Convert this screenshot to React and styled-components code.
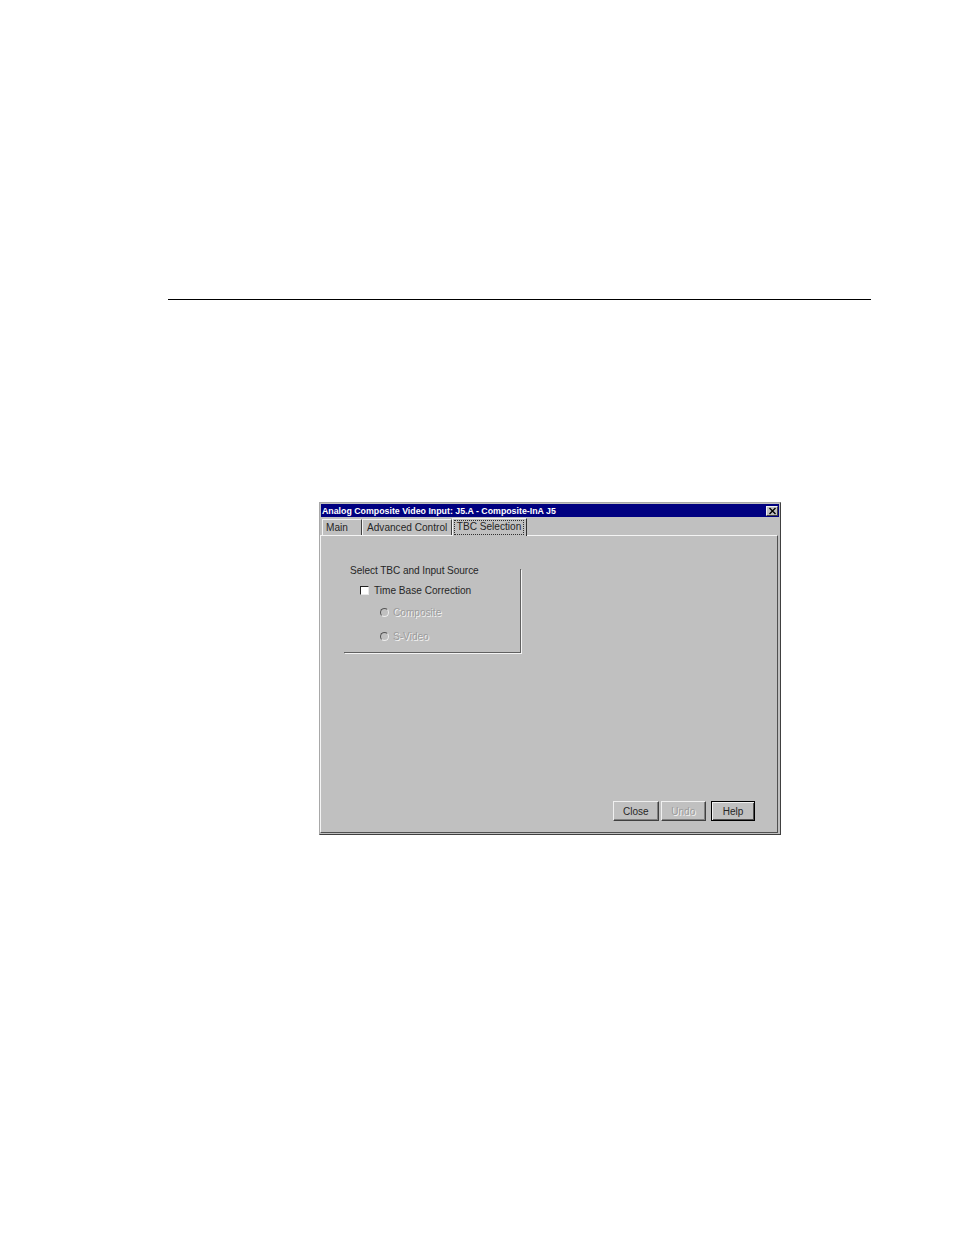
import styled, { createGlobalStyle } from "styled-components"

const GlobalStyle = createGlobalStyle`
body{
    margin: 0;
    background: #ffffff;
    font-family: "Liberation Sans", Arial, sans-serif;
}
`

export default function App(){
    return(
        <Page>
            <GlobalStyle />
            <Rule />
            <Dialog>
                <TitleBar>
                    <Title>Analog Composite Video Input: J5.A - Composite-InA J5</Title>
                    <CloseBox>
                        <svg width="9" height="8" viewBox="0 0 9 8">
                            <path d="M1.5 1 L7.5 7 M7.5 1 L1.5 7" stroke="#000" strokeWidth="1.4" fill="none" />
                        </svg>
                    </CloseBox>
                </TitleBar>
                <Tabs>
                    <Tab $width={40} $inset={3}>Main</Tab>
                    <Tab $width={90} $inset={4}>Advanced Control</Tab>
                    <ActiveTab>
                        <FocusLabel>TBC Selection</FocusLabel>
                    </ActiveTab>
                </Tabs>
                <Panel>
                    <Group>
                        <Legend>Select TBC and Input Source</Legend>
                        <CheckRow>
                            <CheckBox />
                            <span>Time Base Correction</span>
                        </CheckRow>
                        <RadioRow $gap={10}>
                            <Radio />
                            <DisabledText>Composite</DisabledText>
                        </RadioRow>
                        <RadioRow $gap={12}>
                            <Radio />
                            <DisabledText>S-Video</DisabledText>
                        </RadioRow>
                    </Group>
                    <Buttons>
                        <Button>Close</Button>
                        <Button disabled><DisabledText>Undo</DisabledText></Button>
                        <DefaultButton>Help</DefaultButton>
                    </Buttons>
                </Panel>
            </Dialog>
        </Page>
    )
}

const Page = styled.div`
padding: 299px 0 0 168px;
height: 936px;
`
const Rule = styled.div`
width: 703px;
height: 1px;
background: #000000;
`
const Dialog = styled.div`
box-sizing: border-box;
margin: 202px 0 0 151px;
width: 462px;
height: 333px;
padding: 1px 1px 1px 0;
background: #c0c0c0;
border: 1px solid;
border-color: #a8a8a8 #404040 #404040 #a8a8a8;
display: flex;
flex-direction: column;
color: #262626;
`
const TitleBar = styled.div`
height: 13px;
flex-shrink: 0;
margin-left: 1px;
background: #000080;
display: flex;
align-items: center;
justify-content: space-between;
padding: 0 1px;
`
const Title = styled.span`
color: #ffffff;
font-size: 8.8px;
font-weight: 700;
white-space: nowrap;
`
const CloseBox = styled.div`
box-sizing: border-box;
width: 12px;
height: 10px;
background: #c0c0c0;
border: 1px solid;
border-color: #f0f0f0 #404040 #404040 #f0f0f0;
display: flex;
align-items: center;
justify-content: center;
svg{
    display: block;
}
`
const Tabs = styled.div`
display: flex;
align-items: flex-end;
height: 18px;
flex-shrink: 0;
padding-left: 2px;
font-size: 10.1px;
`
const Tab = styled.div`
box-sizing: border-box;
width: ${props => props.$width}px;
height: 16px;
padding: 2px 0 0 ${props => props.$inset}px;
white-space: nowrap;
border-left: 1px solid #f4f4f4;
border-top: 1px solid #f4f4f4;
border-right: 1px solid #404040;
`
const ActiveTab = styled.div`
box-sizing: border-box;
width: 75px;
height: 18px;
margin-bottom: -1px;
padding: 2px 3px 0 2px;
background: #c0c0c0;
border-left: 1px solid #f4f4f4;
border-top: 1px solid #f4f4f4;
border-right: 1px solid #303030;
position: relative;
z-index: 1;
`
const FocusLabel = styled.div`
box-sizing: border-box;
height: 13px;
line-height: 11px;
text-align: center;
white-space: nowrap;
outline: 1px dotted #303030;
`
const Panel = styled.div`
flex: 1;
box-sizing: border-box;
margin-right: 1px;
border-top: 1px solid #f4f4f4;
border-left: 1px solid #f4f4f4;
border-right: 1px solid #505050;
border-bottom: 1px solid #505050;
padding: 33px 22px 11px 23px;
display: flex;
flex-direction: column;
justify-content: space-between;
font-size: 10.1px;
`
const Group = styled.div`
box-sizing: border-box;
width: 177px;
height: 84px;
padding-left: 6px;
border-right: 1px solid #606060;
border-bottom: 1px solid #606060;
box-shadow: 1px 1px 0 #f4f4f4;
`
const Legend = styled.div`
height: 12px;
line-height: 12px;
margin: -4px 0 1px;
letter-spacing: -0.07px;
white-space: nowrap;
`
const CheckRow = styled.label`
display: flex;
align-items: center;
gap: 5px;
height: 12px;
margin: 7px 0 0 10px;
white-space: nowrap;
`
const CheckBox = styled.span`
box-sizing: border-box;
width: 9px;
height: 9px;
background: #ffffff;
border: 1px solid;
border-color: #202020 #e8e8e8 #e8e8e8 #202020;
`
const RadioRow = styled.div`
display: flex;
align-items: center;
gap: 4px;
height: 12px;
margin: ${props => props.$gap}px 0 0 30px;
white-space: nowrap;
`
const Radio = styled.span`
box-sizing: border-box;
width: 9px;
height: 9px;
border-radius: 50%;
background: #c0c0c0;
border: 1.5px solid #555555;
border-right-color: #eeeeee;
border-bottom-color: #eeeeee;
`
const DisabledText = styled.span`
color: #9c9c9c;
text-shadow: 1px 1px 0 #f4f4f4;
`
const Buttons = styled.div`
display: flex;
justify-content: flex-end;
gap: 2px;
`
const Button = styled.button`
box-sizing: border-box;
width: 45.5px;
height: 20px;
padding: 0;
background: #c0c0c0;
color: #262626;
font-family: inherit;
font-size: 10px;
border: 1px solid;
border-color: #f0f0f0 #404040 #404040 #f0f0f0;
box-shadow: inset -1px -1px 0 #808080;
`
const DefaultButton = styled(Button)`
width: 44px;
margin-left: 3px;
border-color: #000000;
box-shadow: inset 1px 1px 0 #f0f0f0, inset -1px -1px 0 #505050;
`
